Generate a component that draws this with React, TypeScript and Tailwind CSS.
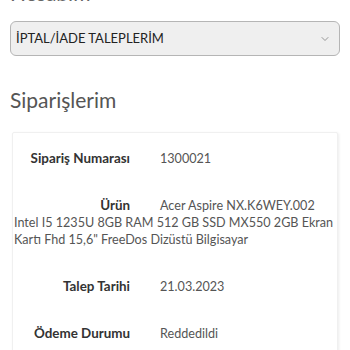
import { ChevronDown } from 'lucide-react'

const rows = [
  { label: 'Sipariş Numarası', value: '1300021' },
  { label: 'Ürün', value: 'Acer Aspire NX.K6WEY.002 Intel I5 1235U 8GB RAM 512 GB SSD MX550 2GB Ekran Kartı Fhd 15,6" FreeDos Dizüstü Bilgisayar' },
  { label: 'Talep Tarihi', value: '21.03.2023' },
  { label: 'Ödeme Durumu', value: 'Reddedildi' },
]

export default function App() {
  return (
    <div className="w-[350px] h-[350px] overflow-hidden bg-white font-['Lato',sans-serif]">
      <div className="px-[10px]">
        {/* cut-off heading from above */}
        <h2 className="-mt-[19px] text-[21px] leading-[24px] text-[#666]">Hesabım</h2>

        {/* Select */}
        <div className="mt-[16px] h-[35px] flex items-center justify-between pl-[5px] pr-[8px] rounded-[6px] border border-[#b5b5b5] bg-[#efefef]">
          <span className="text-[13px] text-[#222]">İPTAL/İADE TALEPLERİM</span>
          <ChevronDown size={12} strokeWidth={1.5} className="text-[#777]" />
        </div>

        <h1 className="mt-[31px] text-[21px] leading-[26px] text-[#555]">Siparişlerim</h1>
      </div>

      {/* Card */}
      <div className="mt-[19px] mx-[12px] pl-[1px] pt-[17px] bg-white border border-[#f0f0f0] shadow-[1px_1px_3px_rgba(0,0,0,0.08)] rounded-[2px]">
        {rows.map((r) => (
          <div key={r.label} className="mb-[30px] -mr-[2px] text-[12.6px] leading-[17px] text-[#555]">
            <span className="inline-block w-[116px] mr-[30px] text-right text-[13.4px] font-bold text-[#333]">{r.label}</span>
            {r.value}
          </div>
        ))}
      </div>
    </div>
  )
}
